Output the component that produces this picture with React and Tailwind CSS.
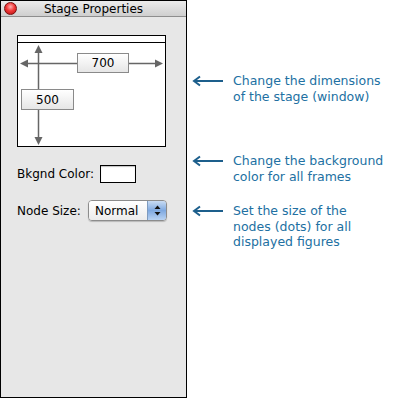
import React from 'react';

const panelFont = { fontFamily: '"DejaVu Sans", "Liberation Sans", sans-serif' };

function ArrowLeft() {
  return (
    <svg width="32" height="12" viewBox="0 0 32 12" className="shrink-0">
      <line x1="2" y1="6" x2="31" y2="6" stroke="#1d5f8c" strokeWidth="2" />
      <polyline points="8,1.5 2,6 8,10.5" fill="none" stroke="#1d5f8c" strokeWidth="2" />
    </svg>
  );
}

function Note({ lines, className }) {
  return (
    <div className={`flex items-start gap-[9px] ${className}`}>
      <div className="pt-[2px]"><ArrowLeft /></div>
      <div className="text-[12.5px] leading-[15.5px] text-[#2170a2]" style={panelFont}>
        {lines.map((l) => (
          <div key={l}>{l}</div>
        ))}
      </div>
    </div>
  );
}

function StageDiagram() {
  return (
    <div className="relative w-[149px] h-[112px] border border-black bg-white">
      <div className="h-[7px] border-b border-black" />
      <svg className="absolute inset-0" width="147" height="110" viewBox="0 0 147 110">
        <g stroke="#666" strokeWidth="1.5" fill="#666">
          <line x1="20.5" y1="12" x2="20.5" y2="104" />
          <line x1="6" y1="27.5" x2="141" y2="27.5" />
          <polygon points="20.5,9 16.5,17 24.5,17" stroke="none" />
          <polygon points="20.5,109 16.5,101 24.5,101" stroke="none" />
          <polygon points="2,27.5 10,23.5 10,31.5" stroke="none" />
          <polygon points="145,27.5 137,23.5 137,31.5" stroke="none" />
        </g>
      </svg>
      <div className="absolute left-[59px] top-[17px] w-[52px] h-[20px] border border-[#8a8a8a] bg-gradient-to-b from-white to-[#e6e6e6] flex items-center justify-center text-[12px] text-black" style={panelFont}>700</div>
      <div className="absolute left-[3px] top-[53px] w-[53px] h-[21px] border border-[#8a8a8a] bg-gradient-to-b from-white to-[#e6e6e6] flex items-center justify-center text-[12px] text-black" style={panelFont}>500</div>
    </div>
  );
}

export default function App() {
  return (
    <div className="w-[400px] h-[398px] bg-white flex" style={panelFont}>
      <div className="w-[187px] h-[398px] border border-black bg-[#e7e7e7] flex flex-col">
        <div className="h-[16px] relative flex items-center justify-center bg-gradient-to-b from-[#ececec] to-[#cfcfcf] border-b border-[#8e8e8e]">
          <div className="absolute left-[3px] top-[1px] w-[13px] h-[13px] rounded-full border border-[#7a1010] bg-[radial-gradient(circle_at_50%_35%,#ffb0b0_0%,#f23a3a_45%,#b40f0f_100%)]" />
          <span className="text-[12px] leading-none text-black" style={{ fontFamily: '"DejaVu Sans", sans-serif' }}>Stage Properties</span>
        </div>
        <div className="pl-[16px] pt-[18px]">
          <StageDiagram />
          <div className="flex items-center mt-[18px] h-[18px]">
            <span className="text-[12px] text-black w-[83px]">Bkgnd Color:</span>
            <div className="w-[36px] h-[18px] border border-black bg-white shadow-[inset_0_1px_1px_rgba(0,0,0,0.25)]" />
          </div>
          <div className="flex items-center mt-[17px] h-[21px]">
            <span className="text-[12px] text-black w-[71px]">Node Size:</span>
            <div className="w-[79px] h-[21px] flex rounded-[4px] border border-[#8c8c8c] overflow-hidden shadow-[0_1px_1px_rgba(0,0,0,0.2)]">
              <div className="flex-1 bg-gradient-to-b from-white to-[#ececec] flex items-center pl-[6px] text-[12px] text-black">Normal</div>
              <div className="w-[19px] border-l border-[#7e9bbf] bg-gradient-to-b from-[#c9dcf3] via-[#7fa9e0] to-[#b9d3f3] flex items-center justify-center">
                <svg width="7" height="11" viewBox="0 0 7 11">
                  <polygon points="3.5,0.5 0.5,4 6.5,4" fill="#111" />
                  <polygon points="3.5,10.5 0.5,7 6.5,7" fill="#111" />
                </svg>
              </div>
            </div>
          </div>
        </div>
      </div>
      <div className="pl-[5px] flex flex-col">
        <Note className="mt-[73px]" lines={['Change the dimensions', 'of the stage (window)']} />
        <Note className="mt-[49px]" lines={['Change the background', 'color for all frames']} />
        <Note className="mt-[19px]" lines={['Set the size of the', 'nodes (dots) for all', 'displayed figures']} />
      </div>
    </div>
  );
}
